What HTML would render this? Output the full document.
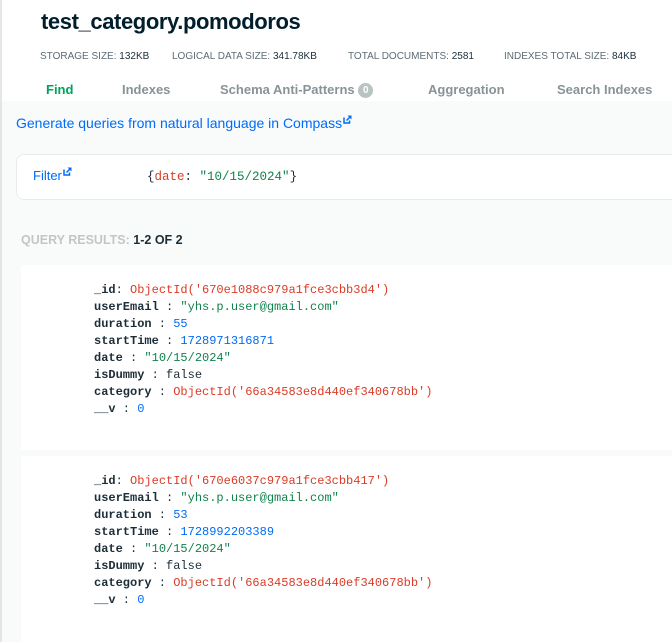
<!DOCTYPE html>
<html><head><style>
body{margin:0;width:672px;height:642px;overflow:hidden;background:#f9fbfa;font-family:"Liberation Sans",sans-serif;position:relative}
.lb{position:absolute;left:0;top:0;width:2px;height:642px;background:#e3e6e5}
.hdr{position:absolute;left:2px;top:0;width:670px;height:101px;background:#fff}
.t{position:absolute;left:39px;top:9px;font-size:22px;font-weight:bold;color:#001e2b;letter-spacing:-0.4px}
.st{position:absolute;top:51px;font-size:10px;color:#5c6c75}
.st b{font-weight:normal;color:#1c2d38}
.tab{position:absolute;top:82px;font-size:13px;font-weight:bold;color:#889397}
.badge{display:inline-block;width:15px;height:15px;border-radius:50%;background:#b8c4c2;color:#fff;font-size:10px;text-align:center;line-height:15px;vertical-align:1px}
.gen{position:absolute;left:16px;top:115px;font-size:14px;color:#016bf8}
.filt{position:absolute;left:16px;top:154px;width:670px;height:44px;background:#fff;border:1px solid #e8edeb;border-radius:8px}
.mono{font-family:"Liberation Mono",monospace}
.qr{position:absolute;left:21px;top:233px;font-size:12.5px;font-weight:bold;color:#c1c7c6}
.qr b{color:#1c2d38}
.card{position:absolute;left:21px;width:660px;background:#fff}
.doc{position:absolute;left:73px;top:17px;font-family:"Liberation Mono",monospace;font-size:12px;line-height:17px;color:#1c2d38;white-space:pre}
.k{font-weight:bold}.r{color:#db3b26}.g{color:#12824d}.n{color:#016bf8}
.ic{display:inline-block;vertical-align:4px;margin-left:1px}
</style></head><body>
<div class="lb"></div>
<div class="hdr">
<div class="t">test_category.pomodoros</div>
<div class="st" style="left:38px">STORAGE SIZE: <b>132KB</b></div>
<div class="st" style="left:170px">LOGICAL DATA SIZE: <b>341.78KB</b></div>
<div class="st" style="left:346px">TOTAL DOCUMENTS: <b>2581</b></div>
<div class="st" style="left:502px">INDEXES TOTAL SIZE: <b>84KB</b></div>
<div class="tab" style="left:44px;color:#00a35c">Find</div>
<div class="tab" style="left:120px">Indexes</div>
<div class="tab" style="left:218px">Schema Anti-Patterns <span class="badge">0</span></div>
<div class="tab" style="left:426px">Aggregation</div>
<div class="tab" style="left:555px">Search Indexes</div>
</div>
<div class="gen">Generate queries from natural language in Compass<svg class="ic" width="9" height="9" viewBox="0 0 9 9"><path d="M1 2.5v5.5h5.5V5.5" fill="none" stroke="#016bf8" stroke-width="1.5"/><path d="M4.5 0.5h4v4z" fill="#016bf8"/><path d="M3.5 5.5l4-4" stroke="#016bf8" stroke-width="1.5"/></svg></div>
<div class="filt">
<div style="position:absolute;left:16px;top:12px;font-size:13px;color:#016bf8">Filter<svg class="ic" width="9" height="9" viewBox="0 0 9 9"><path d="M1 2.5v5.5h5.5V5.5" fill="none" stroke="#016bf8" stroke-width="1.5"/><path d="M4.5 0.5h4v4z" fill="#016bf8"/><path d="M3.5 5.5l4-4" stroke="#016bf8" stroke-width="1.5"/></svg></div>
<div class="mono" style="position:absolute;left:130px;top:15px;font-size:12.5px;color:#1c2d38">{<span class="r">date</span>: <span class="g">"10/15/2024"</span>}</div>
</div>
<div class="qr">QUERY RESULTS: <b>1-2 OF 2</b></div>
<div class="card" style="top:265px;height:185px"><div class="doc"><span class="k">_id</span>: <span class="r">ObjectId('670e1088c979a1fce3cbb3d4')</span>
<span class="k">userEmail</span> : <span class="g">"yhs.p.user@gmail.com"</span>
<span class="k">duration</span> : <span class="n">55</span>
<span class="k">startTime</span> : <span class="n">1728971316871</span>
<span class="k">date</span> : <span class="g">"10/15/2024"</span>
<span class="k">isDummy</span> : false
<span class="k">category</span> : <span class="r">ObjectId('66a34583e8d440ef340678bb')</span>
<span class="k">__v</span> : <span class="n">0</span></div></div>
<div class="card" style="top:456px;height:186px"><div class="doc"><span class="k">_id</span>: <span class="r">ObjectId('670e6037c979a1fce3cbb417')</span>
<span class="k">userEmail</span> : <span class="g">"yhs.p.user@gmail.com"</span>
<span class="k">duration</span> : <span class="n">53</span>
<span class="k">startTime</span> : <span class="n">1728992203389</span>
<span class="k">date</span> : <span class="g">"10/15/2024"</span>
<span class="k">isDummy</span> : false
<span class="k">category</span> : <span class="r">ObjectId('66a34583e8d440ef340678bb')</span>
<span class="k">__v</span> : <span class="n">0</span></div></div>
</body></html>
